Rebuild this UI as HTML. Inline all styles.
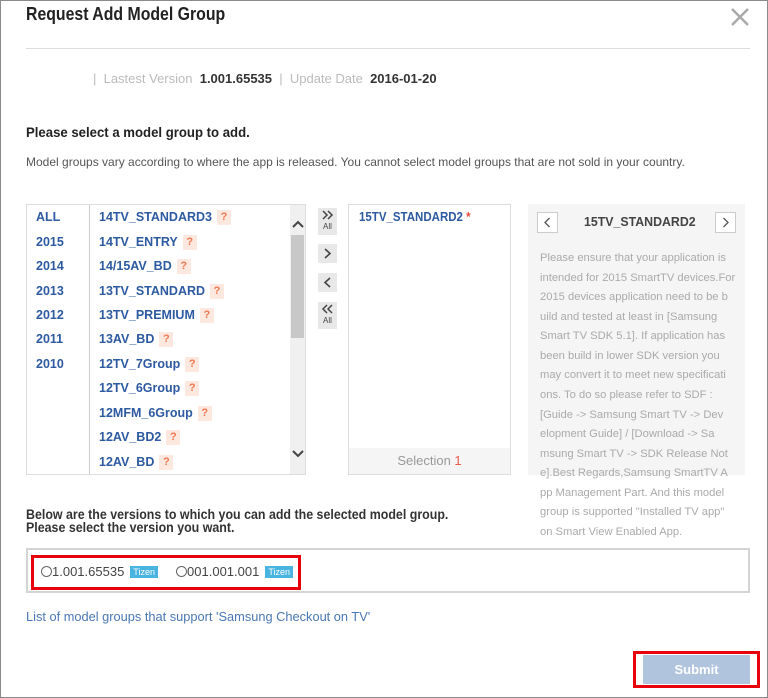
<!DOCTYPE html>
<html><head><meta charset="utf-8"><style>
*{margin:0;padding:0;box-sizing:border-box}
body{width:768px;height:698px;background:#fff;font-family:"Liberation Sans",sans-serif;position:relative;overflow:hidden;color:#333}
.a{position:absolute;white-space:nowrap}
.c{transform-origin:0 0}
.frame{position:absolute;left:0;top:0;width:768px;height:698px;border:1px solid #8a8a8a}
.q{display:inline-block;background:#fde8e0;color:#f07850;font-size:11px;width:14px;height:15px;line-height:15px;text-align:center;margin-left:5px;vertical-align:1px;font-weight:bold}
.yr{position:absolute;left:36px;font-size:12.5px;font-weight:bold;color:#2d5aa0}
.md{position:absolute;left:99px;font-size:12.5px;font-weight:bold;color:#2d5aa0;white-space:nowrap}
.btn{position:absolute;left:318px;width:19px;background:#e8e8e8;color:#444;text-align:center;font-size:13px}
.info{position:absolute;left:540px;font-size:11.2px;color:#aaa;white-space:nowrap}
.tz{display:inline-block;background:#4ab4e0;color:#fff;font-size:9px;padding:0 3px;height:12px;line-height:12px;vertical-align:1px;margin-left:6px}
.rd{display:inline-block;width:11px;height:11px;border:1px solid #666;border-radius:50%;vertical-align:-1px}
</style></head><body>
<div class="frame"></div>
<div class="a c" style="left:26px;top:4px;font-size:18px;font-weight:bold;color:#222;transform:scaleX(0.88)">Request Add Model Group</div>
<svg class="a" style="left:730px;top:7px" width="20" height="20"><path d="M2 2L18 18M18 2L2 18" stroke="#aaa" stroke-width="2.5"/></svg>
<div class="a" style="left:26px;top:48px;width:724px;height:1px;background:#ddd"></div>
<div class="a" style="left:93px;top:71px;font-size:13px;color:#bbb">|&nbsp; Lastest Version&nbsp; <b style="color:#333">1.001.65535</b>&nbsp; |&nbsp; Update Date&nbsp; <b style="color:#333">2016-01-20</b></div>
<div class="a c" style="left:26px;top:124px;font-size:14px;font-weight:bold;color:#222;transform:scaleX(0.94)">Please select a model group to add.</div>
<div class="a" style="left:26px;top:155px;font-size:12px;color:#555">Model groups vary according to where the app is released. You cannot select model groups that are not sold in your country.</div>

<div class="a" style="left:26px;top:204px;width:280px;height:271px;border:1px solid #ddd"></div>
<div class="a" style="left:89px;top:205px;width:1px;height:269px;background:#ccc"></div>
<div class="a" style="left:290px;top:205px;width:15px;height:269px;background:#f0f0f0"></div>
<div class="a" style="left:291px;top:235px;width:13px;height:103px;background:#c8c8c8"></div>
<svg class="a" style="left:292px;top:450px" width="12" height="8"><path d="M1 1L6 6L11 1" stroke="#444" stroke-width="2" fill="none"/></svg>
<svg class="a" style="left:292px;top:220px" width="12" height="8"><path d="M1 7L6 2L11 7" stroke="#444" stroke-width="2" fill="none"/></svg>
<div class="yr" style="top:210px">ALL</div><div class="yr" style="top:235px">2015</div><div class="yr" style="top:259px">2014</div><div class="yr" style="top:284px">2013</div><div class="yr" style="top:308px">2012</div><div class="yr" style="top:332px">2011</div><div class="yr" style="top:357px">2010</div>
<div class="md" style="top:210px">14TV_STANDARD3<span class="q">?</span></div>
<div class="md" style="top:235px">14TV_ENTRY<span class="q">?</span></div>
<div class="md" style="top:259px">14/15AV_BD<span class="q">?</span></div>
<div class="md" style="top:284px">13TV_STANDARD<span class="q">?</span></div>
<div class="md" style="top:308px">13TV_PREMIUM<span class="q">?</span></div>
<div class="md" style="top:332px">13AV_BD<span class="q">?</span></div>
<div class="md" style="top:357px">12TV_7Group<span class="q">?</span></div>
<div class="md" style="top:381px">12TV_6Group<span class="q">?</span></div>
<div class="md" style="top:406px">12MFM_6Group<span class="q">?</span></div>
<div class="md" style="top:430px">12AV_BD2<span class="q">?</span></div>
<div class="md" style="top:455px">12AV_BD<span class="q">?</span></div>

<div class="btn" style="top:208px;height:27px"><svg width="19" height="14" style="display:block"><path d="M5 3L9 7L5 11M10 3L14 7L10 11" stroke="#444" stroke-width="1.5" fill="none"/></svg><div style="font-size:8px;line-height:9px">All</div></div>
<div class="btn" style="top:244px;height:19px"><svg width="19" height="19" style="display:block"><path d="M7 5L12 9.5L7 14" stroke="#444" stroke-width="1.6" fill="none"/></svg></div>
<div class="btn" style="top:273px;height:19px"><svg width="19" height="19" style="display:block"><path d="M12 5L7 9.5L12 14" stroke="#444" stroke-width="1.6" fill="none"/></svg></div>
<div class="btn" style="top:302px;height:27px"><svg width="19" height="14" style="display:block"><path d="M9 3L5 7L9 11M14 3L10 7L14 11" stroke="#444" stroke-width="1.5" fill="none"/></svg><div style="font-size:8px;line-height:9px">All</div></div>

<div class="a" style="left:348px;top:204px;width:163px;height:271px;border:1px solid #ddd"></div>
<div class="a c" style="left:359px;top:210px;font-size:12.5px;font-weight:bold;color:#2d5aa0;transform:scaleX(0.92)">15TV_STANDARD2 <span style="color:#e84a3a">*</span></div>
<div class="a" style="left:349px;top:448px;width:161px;height:26px;background:#f5f5f5;text-align:center;line-height:26px;font-size:13px;color:#999">Selection <span style="color:#e85a4a">1</span></div>

<div class="a" style="left:528px;top:204px;width:217px;height:271px;background:#f5f5f5"></div>
<div class="a" style="left:537px;top:212px;width:21px;height:21px;border:1px solid #ccc;background:#fff"><svg width="19" height="19" style="display:block"><path d="M11.5 5L7 9.5L11.5 14" stroke="#555" stroke-width="1.3" fill="none"/></svg></div>
<div class="a" style="left:715px;top:212px;width:21px;height:21px;border:1px solid #ccc;background:#fff"><svg width="19" height="19" style="display:block"><path d="M7.5 5L12 9.5L7.5 14" stroke="#555" stroke-width="1.3" fill="none"/></svg></div>
<div class="a c" style="left:584px;top:214px;font-size:13px;font-weight:bold;color:#444;transform:scaleX(0.95)">15TV_STANDARD2</div>
<div class="info" style="top:252px">Please ensure that your application is</div>
<div class="info" style="top:272px">intended for 2015 SmartTV devices.For</div>
<div class="info" style="top:291px">2015 devices application need to be b</div>
<div class="info" style="top:311px">uild and tested at least in [Samsung</div>
<div class="info" style="top:330px">Smart TV SDK 5.1]. If application has</div>
<div class="info" style="top:350px">been build in lower SDK version you</div>
<div class="info" style="top:369px">may convert it to meet new specificati</div>
<div class="info" style="top:389px">ons. To do so please refer to SDF :</div>
<div class="info" style="top:409px">[Guide -&gt; Samsung Smart TV -&gt; Dev</div>
<div class="info" style="top:428px">elopment Guide] / [Download -&gt; Sa</div>
<div class="info" style="top:448px">msung Smart TV -&gt; SDK Release Not</div>
<div class="info" style="top:467px">e].Best Regards,Samsung SmartTV A</div>
<div class="info" style="top:487px">pp Management Part. And this model</div>
<div class="info" style="top:506px">group is supported "Installed TV app"</div>
<div class="info" style="top:526px">on Smart View Enabled App.</div>

<div class="a c" style="left:26px;top:508px;font-size:13.5px;font-weight:bold;color:#333;line-height:13px;transform:scaleX(0.92)">Below are the versions to which you can add the selected model group.<br>Please select the version you want.</div>
<div class="a" style="left:26px;top:548px;width:724px;height:45px;border:2px solid #d4d4d4"></div>
<div class="a" style="left:31px;top:555px;width:270px;height:35px;border:3px solid #e8000a"></div>
<div class="a" style="left:41px;top:564px;font-size:13px;color:#444"><span class="rd"></span>1.001.65535<span class="tz">Tizen</span>&nbsp;&nbsp;&nbsp;&nbsp;&nbsp;<span class="rd"></span>001.001.001<span class="tz">Tizen</span></div>
<div class="a c" style="left:26px;top:609px;font-size:13px;color:#4a77b4;transform:scaleX(0.985)">List of model groups that support 'Samsung Checkout on TV'</div>
<div class="a" style="left:633px;top:651px;width:127px;height:37px;border:3px solid #e8000a"></div>
<div class="a" style="left:643px;top:655px;width:107px;height:29px;background:#b0c4de;color:#fff;font-weight:bold;font-size:13px;text-align:center;line-height:29px">Submit</div>
</body></html>
